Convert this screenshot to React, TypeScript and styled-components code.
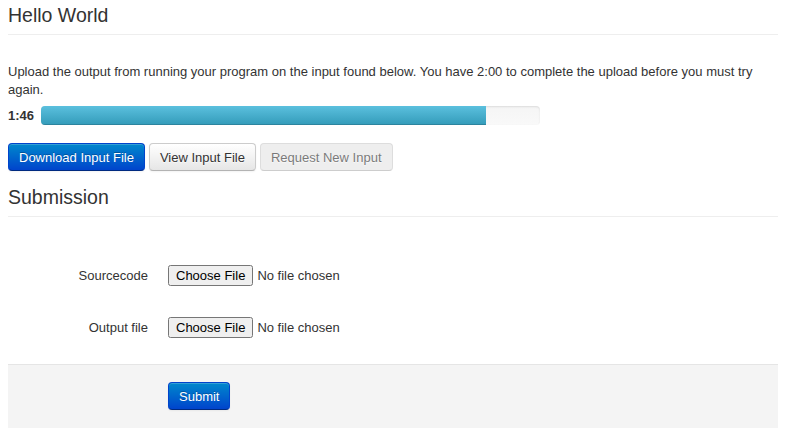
import React from "react";
import styled, {createGlobalStyle} from "styled-components";

const GlobalStyle = createGlobalStyle`
    body {
        margin: 8px;
        background: #ffffff;
        color: #333333;
        font-family: "Liberation Sans", Arial, sans-serif;
        font-size: 13px;
        line-height: 18px;
    }
`;

const Page = styled.div`
    width: 770px;
`;

const PageHeader = styled.h3<{ $top: number }>`
    margin: ${(props) => props.$top}px 0 0 0;
    padding-bottom: 4px;
    font-size: 19.5px;
    font-weight: normal;
    line-height: 30px;
    border-bottom: 1px solid #eeeeee;
`;

const Intro = styled.p`
    margin: 28px 0 0 0;
`;

const TimerRow = styled.div`
    display: flex;
    align-items: center;
    gap: 6px;
    margin-top: 7px;
`;

const TimeLabel = styled.strong`
    width: 27px;
`;

const Progress = styled.div`
    width: 499px;
    height: 19px;
    border-radius: 4px;
    overflow: hidden;
    background-image: linear-gradient(to bottom, #f5f5f5, #f9f9f9);
    box-shadow: inset 0 1px 2px rgba(0, 0, 0, 0.1);
`;

const Bar = styled.div`
    height: 100%;
    background-image: linear-gradient(to bottom, #5bc0de, #339bb9);
    box-shadow: inset 0 -1px 0 rgba(0, 0, 0, 0.15);
`;

const ButtonRow = styled.div`
    display: flex;
    gap: 4px;
    margin-top: 18px;
`;

const Button = styled.button<{ $primary?: boolean }>`
    height: 28px;
    padding: 0 10px;
    font-family: "Liberation Sans", Arial, sans-serif;
    font-size: 13px;
    border-radius: 4px;
    cursor: pointer;
    color: ${(props) => props.$primary ? "#ffffff" : "#333333"};
    background-image: ${(props) => props.$primary
            ? "linear-gradient(to bottom, #0088cc, #0044cc)"
            : "linear-gradient(to bottom, #ffffff, #e6e6e6)"};
    border: 1px solid ${(props) => props.$primary ? "#0044cc" : "#cccccc"};
    border-bottom-color: ${(props) => props.$primary ? "#002a80" : "#b3b3b3"};
    text-shadow: ${(props) => props.$primary ? "0 -1px 0 rgba(0,0,0,0.25)" : "0 1px 1px rgba(255,255,255,0.75)"};
    box-shadow: inset 0 1px 0 rgba(255, 255, 255, 0.2), 0 1px 2px rgba(0, 0, 0, 0.05);

    &:disabled {
        cursor: default;
        background-image: none;
        background-color: #e6e6e6;
        opacity: 0.65;
        box-shadow: none;
    }
`;

const Form = styled.form`
    margin-top: 48px;
`;

const ControlGroup = styled.div`
    display: flex;
    align-items: center;
    height: 21px;
    margin-bottom: 31px;
`;

const Label = styled.label`
    width: 140px;
    text-align: right;
    padding-right: 20px;
`;

const FileInput = styled.input`
    font-family: "Liberation Sans", Arial, sans-serif;
    font-size: 13px;
    color: #333333;
`;

const FormActions = styled.div`
    margin-top: -5px;
    padding: 17px 0 18px 160px;
    background: #f4f4f4;
    border-top: 1px solid #e5e5e5;
`;

const App: React.FC = () => {
    const remaining = 445 / 499;

    return (
        <>
            <GlobalStyle/>
            <Page>
                <PageHeader $top={-8}>Hello World</PageHeader>
                <Intro>
                    Upload the output from running your program on the input found below. You have 2:00 to
                    complete the upload before you must try again.
                </Intro>
                <TimerRow>
                    <TimeLabel>1:46</TimeLabel>
                    <Progress>
                        <Bar style={{width: `${remaining * 100}%`}}/>
                    </Progress>
                </TimerRow>
                <ButtonRow>
                    <Button $primary type="button">Download Input File</Button>
                    <Button type="button">View Input File</Button>
                    <Button type="button" disabled>Request New Input</Button>
                </ButtonRow>
                <PageHeader $top={11}>Submission</PageHeader>
                <Form onSubmit={(e) => e.preventDefault()}>
                    <ControlGroup>
                        <Label htmlFor="sourcecode">Sourcecode</Label>
                        <FileInput id="sourcecode" type="file"/>
                    </ControlGroup>
                    <ControlGroup>
                        <Label htmlFor="output">Output file</Label>
                        <FileInput id="output" type="file"/>
                    </ControlGroup>
                    <FormActions>
                        <Button $primary type="submit">Submit</Button>
                    </FormActions>
                </Form>
            </Page>
        </>
    );
};

export default App;
